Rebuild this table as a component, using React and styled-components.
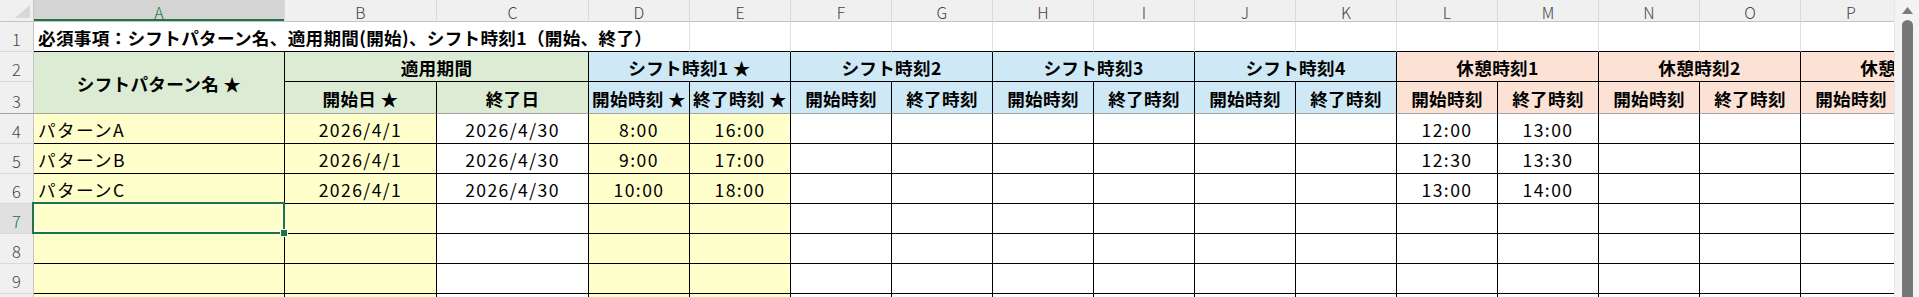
import React from 'react';
import styled, { createGlobalStyle } from 'styled-components';

const GREEN = '#dcebd4';
const BLUE = '#cee8f5';
const PEACH = '#fbe2d5';
const YELLOW = '#ffffcc';
const SELECT = '#217346';
const FREEZE = '#a3a3a3';

const GlobalStyle = createGlobalStyle`
  html, body { margin: 0; padding: 0; background: #fff; }
  body { font-family: "Noto Sans CJK JP", "Noto Sans", sans-serif; }
`;

const Window = styled.div`
  display: flex;
  width: 1919px;
  height: 297px;
  overflow: hidden;
`;

const Viewport = styled.div`
  width: 1894px;
  height: 297px;
  overflow: hidden;
  flex-shrink: 0;
`;

const Grid = styled.div`
  display: grid;
  grid-template-columns: 34px 251px 152px 152px repeat(14, 101px);
  grid-template-rows: 22px 30px 30px 32px repeat(7, 30px);
  width: max-content;
  font-size: 17.6px;
  line-height: 1;
  color: #000;
`;

const Corner = styled.div`
  background: #f0f0f0;
  border-right: 1px solid #c4c4c4;
  border-bottom: 1px solid #c4c4c4;
  display: flex;
  align-items: flex-end;
  justify-content: flex-end;
  padding: 0 3px 3px 0;
`;

const ColHead = styled.div`
  background: ${p => (p.$active ? '#d4d4d4' : '#f0f0f0')};
  color: ${p => (p.$active ? SELECT : '#444')};
  border-right: 1px solid #dadada;
  border-bottom: 1px solid #c4c4c4;
  box-shadow: ${p => (p.$active ? `inset 0 -2px 0 ${SELECT}` : 'none')};
  display: flex;
  align-items: center;
  justify-content: center;
  padding-top: 3px;
  font-size: 16px;
  font-weight: 300;
`;

const RowHead = styled.div`
  background: ${p => (p.$active ? '#e0e0e0' : '#f0f0f0')};
  color: ${p => (p.$active ? SELECT : '#444')};
  border-right: 1px solid #c4c4c4;
  border-bottom: 1px solid ${p => (p.$freeze ? FREEZE : '#dadada')};
  display: flex;
  align-items: flex-end;
  justify-content: center;
  padding-bottom: 4px;
  font-size: 16.5px;
  font-weight: 300;
`;

const Cell = styled.div`
  position: relative;
  grid-column: span ${p => p.$cs || 1};
  grid-row: span ${p => p.$rs || 1};
  background: ${p => p.$bg || '#fff'};
  border-right: 1px solid ${p => p.$vline || '#000'};
  border-bottom: 1px solid ${p => p.$hline || '#000'};
  display: flex;
  align-items: center;
  justify-content: ${p => (p.$left ? 'flex-start' : 'center')};
  padding: ${p => (p.$left ? '2px 0 0 4px' : '2px 0 0')};
  font-weight: ${p => (p.$bold ? 700 : 400)};
  letter-spacing: ${p => (p.$bold ? '0.3px' : '1.4px')};
  white-space: nowrap;
`;

const Selection = styled.div`
  position: absolute;
  top: -2px;
  left: -2px;
  right: -1px;
  bottom: -1px;
  border: 2px solid ${SELECT};
  box-shadow: inset 0 0 0 1px #fff;
  z-index: 2;
  pointer-events: none;
`;

const FillHandle = styled.div`
  position: absolute;
  right: -5px;
  bottom: -5px;
  width: 6px;
  height: 6px;
  background: ${SELECT};
  border: 1px solid #fff;
`;

const Scrollbar = styled.div`
  width: 25px;
  height: 297px;
  background: #f3f3f3;
  border-left: 1px solid #e6e6e6;
  box-sizing: border-box;
  display: flex;
  flex-direction: column;
  align-items: center;
  padding-top: 7px;
  gap: 6px;
`;

const Thumb = styled.div`
  width: 11px;
  flex: 1;
  background: #777;
  border-radius: 6px 6px 0 0;
`;

const LETTERS = ['A', 'B', 'C', 'D', 'E', 'F', 'G', 'H', 'I', 'J', 'K', 'L', 'M', 'N', 'O', 'P', 'Q'];

const header2 = [
  { text: 'シフトパターン名 ★', rs: 2, bg: GREEN },
  { text: '適用期間', cs: 2, bg: GREEN },
  { text: 'シフト時刻1 ★', cs: 2, bg: BLUE },
  { text: 'シフト時刻2', cs: 2, bg: BLUE },
  { text: 'シフト時刻3', cs: 2, bg: BLUE },
  { text: 'シフト時刻4', cs: 2, bg: BLUE },
  { text: '休憩時刻1', cs: 2, bg: PEACH },
  { text: '休憩時刻2', cs: 2, bg: PEACH },
  { text: '休憩時刻3', cs: 2, bg: PEACH },
];

const header3 = [
  { text: '開始日 ★', bg: GREEN },
  { text: '終了日', bg: GREEN },
  { text: '開始時刻 ★', bg: BLUE },
  { text: '終了時刻 ★', bg: BLUE },
  ...[0, 1, 2].flatMap(() => [
    { text: '開始時刻', bg: BLUE },
    { text: '終了時刻', bg: BLUE },
  ]),
  ...[0, 1, 2].flatMap(() => [
    { text: '開始時刻', bg: PEACH },
    { text: '終了時刻', bg: PEACH },
  ]),
];

const blank = n => Array(n).fill('');

const rows = [
  ['パターンA', '2026/4/1', '2026/4/30', '8:00', '16:00', ...blank(6), '12:00', '13:00', ...blank(4)],
  ['パターンB', '2026/4/1', '2026/4/30', '9:00', '17:00', ...blank(6), '12:30', '13:30', ...blank(4)],
  ['パターンC', '2026/4/1', '2026/4/30', '10:00', '18:00', ...blank(6), '13:00', '14:00', ...blank(4)],
  blank(17),
  blank(17),
  blank(17),
  blank(17),
];

const yellowCols = [0, 1, 3, 4];

export default function App() {
  return (
    <>
      <GlobalStyle />
      <Window>
        <Viewport>
          <Grid>
            <Corner>
              <svg width="15" height="13" viewBox="0 0 15 13">
                <polygon points="15,0 15,13 0,13" fill="#d8d8d8" />
              </svg>
            </Corner>
            {LETTERS.map(l => (
              <ColHead key={l} $active={l === 'A'}>{l}</ColHead>
            ))}

            <RowHead>1</RowHead>
            <Cell $cs={4} $left $bold $vline="#e1e1e1">
              必須事項：シフトパターン名、適用期間(開始)、シフト時刻1（開始、終了）
            </Cell>
            {blank(13).map((_, i) => (
              <Cell key={i} $vline="#e1e1e1" />
            ))}

            <RowHead>2</RowHead>
            {header2.map((h, i) => (
              <Cell key={i} $cs={h.cs} $rs={h.rs} $bg={h.bg} $bold $hline={h.rs ? FREEZE : '#000'}>
                {h.text}
              </Cell>
            ))}

            <RowHead $freeze>3</RowHead>
            {header3.map((h, i) => (
              <Cell key={i} $bg={h.bg} $bold $hline={FREEZE}>
                {h.text}
              </Cell>
            ))}

            {rows.map((r, ri) => (
              <React.Fragment key={ri}>
                <RowHead $active={ri === 3}>{ri + 4}</RowHead>
                {r.map((v, ci) => (
                  <Cell key={ci} $left={ci === 0} $bg={yellowCols.includes(ci) ? YELLOW : '#fff'}>
                    {v}
                    {ri === 3 && ci === 0 && (
                      <Selection>
                        <FillHandle />
                      </Selection>
                    )}
                  </Cell>
                ))}
              </React.Fragment>
            ))}
          </Grid>
        </Viewport>
        <Scrollbar>
          <svg width="11" height="7" viewBox="0 0 11 7">
            <polygon points="5.5,0 11,7 0,7" fill="#7a7a7a" />
          </svg>
          <Thumb />
        </Scrollbar>
      </Window>
    </>
  );
}
